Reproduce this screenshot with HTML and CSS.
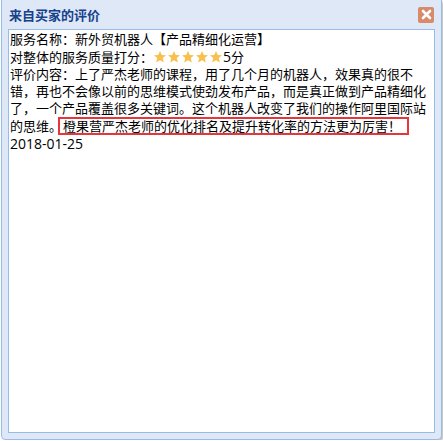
FILE: index.html
```html
<!DOCTYPE html>
<html lang="zh-CN">
<head>
    <meta charset="UTF-8">
    <title>来自买家的评价</title>
    <link rel="stylesheet" href="styles.css">
</head>
<body>
    <div class="dialog">
        <div class="dialog-header">
            <span class="dialog-title">来自买家的评价</span>
            <span class="close-btn">
                <svg width="11" height="11" viewBox="0 0 11 11">
                    <path d="M2 2 L9 9 M9 2 L2 9" stroke="#fff" stroke-width="2.6" stroke-linecap="round"/>
                </svg>
            </span>
        </div>

        <!-- Review content -->
        <div class="dialog-body">
            <div class="line">服务名称：新外贸机器人【产品精细化运营】</div>
            <div class="line">对整体的服务质量打分：<span class="stars">
                <svg class="star" viewBox="0 0 14 14"><path d="M7 1 L8.8 5 L13 5.3 L9.8 8.1 L10.8 12.5 L7 10.2 L3.2 12.5 L4.2 8.1 L1 5.3 L5.2 5 Z"/></svg>
                <svg class="star" viewBox="0 0 14 14"><path d="M7 1 L8.8 5 L13 5.3 L9.8 8.1 L10.8 12.5 L7 10.2 L3.2 12.5 L4.2 8.1 L1 5.3 L5.2 5 Z"/></svg>
                <svg class="star" viewBox="0 0 14 14"><path d="M7 1 L8.8 5 L13 5.3 L9.8 8.1 L10.8 12.5 L7 10.2 L3.2 12.5 L4.2 8.1 L1 5.3 L5.2 5 Z"/></svg>
                <svg class="star" viewBox="0 0 14 14"><path d="M7 1 L8.8 5 L13 5.3 L9.8 8.1 L10.8 12.5 L7 10.2 L3.2 12.5 L4.2 8.1 L1 5.3 L5.2 5 Z"/></svg>
                <svg class="star" viewBox="0 0 14 14"><path d="M7 1 L8.8 5 L13 5.3 L9.8 8.1 L10.8 12.5 L7 10.2 L3.2 12.5 L4.2 8.1 L1 5.3 L5.2 5 Z"/></svg>
            </span><span class="num">5</span>分</div>
            <div class="line">评价内容：上了严杰老师的课程，用了几个月的机器人，效果真的很不错，再也不会像以前的思维模式使劲发布产品，而是真正做到产品精细化了，一个产品覆盖很多关键词。这个机器人改变了我们的操作阿里国际站的思维。<span class="mark">橙果营严杰老师的优化排名及提升转化率的方法更为厉害！</span></div>
            <div class="line num">2018-01-25</div>
        </div>
    </div>
</body>
</html>
```

FILE: styles.css
```css
body {
    margin: 0;
    padding: 0 0 0 1px;
    background-color: #fff;
    font-family: "Open Sans", "Noto Sans CJK JP", sans-serif;
}
.dialog {
    width: 441px;
    box-sizing: border-box;
    padding: 0 6px 6px;
    background-color: #dfe8f6;
    border: 1px solid #99bbe8;
    border-top: none;
    border-radius: 0 0 5px 5px;
    box-shadow: 2px 2px 3px rgba(0, 0, 0, 0.25);
}
.dialog-header {
    display: flex;
    align-items: center;
    justify-content: space-between;
    height: 29px;
    padding-left: 1px;
}
.dialog-title {
    font-size: 13px;
    font-weight: bold;
    color: #15428b;
}
.close-btn {
    display: flex;
    align-items: center;
    justify-content: center;
    width: 16px;
    height: 16px;
    margin-right: 1px;
    background-color: #d98a6b;
    border-radius: 2px;
}
.dialog-body {
    height: 401px;
    padding: 1px 1px 0;
    background: #fff;
    border: 1px solid #99bbe8;
    font-size: 13px;
    line-height: 17px;
    color: #000;
}
.num {
    font-size: 14px;
}
.stars {
    display: inline-flex;
    vertical-align: -2px;
}
.star {
    width: 14px;
    height: 14px;
    fill: #f9c04e;
}
.mark {
    display: inline-block;
    line-height: 14px;
    padding: 0 6px 0 3px;
    margin-left: -4px;
    border: 2px solid #e8353b;
}
```
